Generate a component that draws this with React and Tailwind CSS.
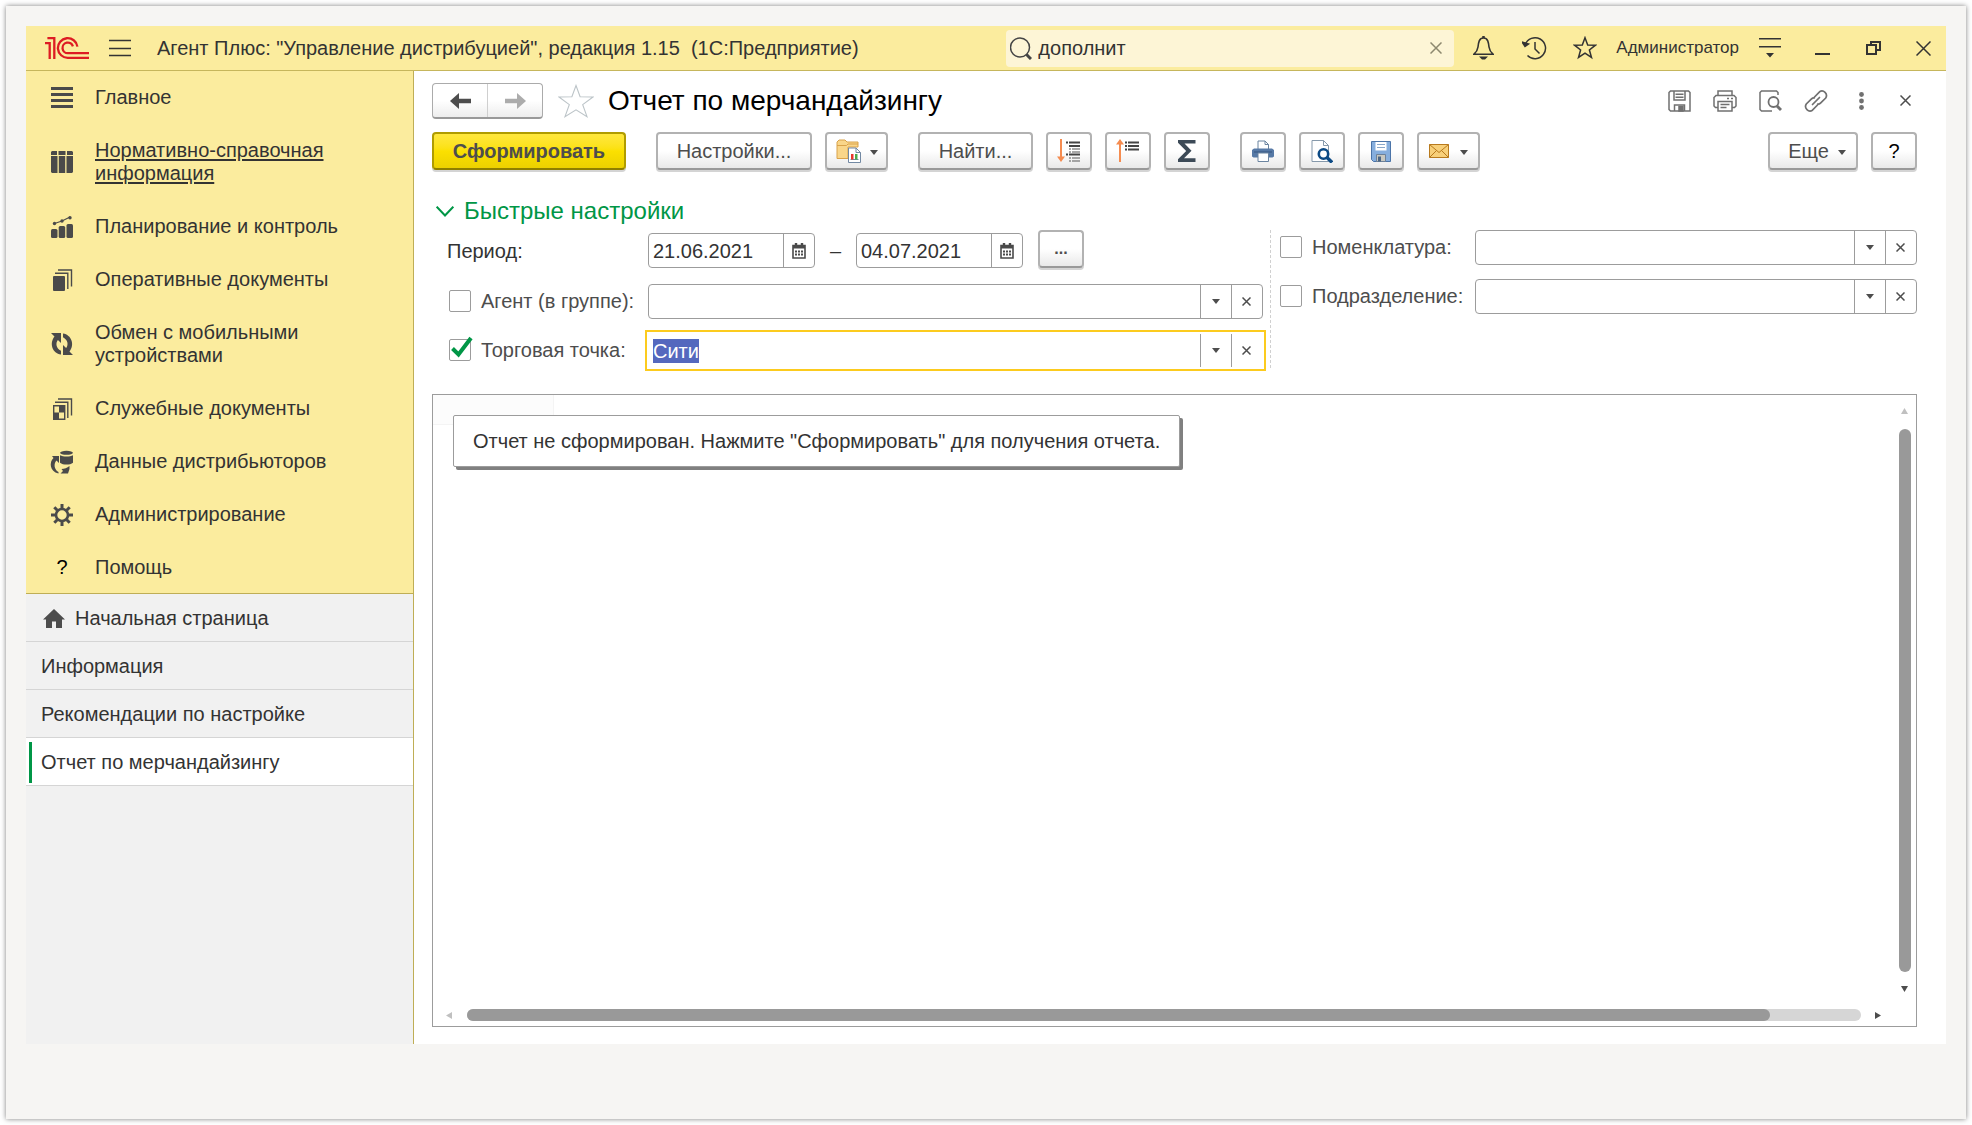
import { useEffect, useRef } from "react";

const buttonBase =
  "flex h-[38px] items-center justify-center rounded border-2 border-[#b2b2b2] border-b-[#999999] bg-linear-to-b from-white from-50% to-[#e9e9e9] text-[20px] leading-6 text-[#4d4d4d] shadow-[0_2px_0_#d4d4d4]";

function Caret({ className = "" }) {
  return (
    <svg width="8" height="5" viewBox="0 0 8 5" className={className} aria-hidden="true">
      <path d="M0 0h8L4 5z" fill="#4d4d4d" />
    </svg>
  );
}

function Cross({ size = 9, color = "#4d4d4d", width = 2 }) {
  return (
    <svg width={size} height={size} viewBox={`0 0 ${size} ${size}`} aria-hidden="true">
      <path d={`M.5 .5L${size - 0.5} ${size - 0.5}M${size - 0.5} .5L.5 ${size - 0.5}`} stroke={color} strokeWidth={width} fill="none" />
    </svg>
  );
}

function Logo() {
  return (
    <svg width="44" height="22" viewBox="0 0 44 22" fill="none" stroke="#dd1c23" strokeWidth="2.3" aria-label="1С">
      <path d="M0 6.2H4.7V22" />
      <path d="M2.4 1.2H9.3V22" />
      <path d="M32.4 9.6A9.8 9.8 0 1 0 23 20.8H44" />
      <path d="M27.9 9.4A5.3 5.3 0 1 0 23 16.2H44" />
    </svg>
  );
}

/* Section icons */
const sectionIcons = {
  main: (
    <path d="M0 1.5h22M0 7.5h22M0 13.5h22M0 19.5h22" stroke="#4a4a4a" strokeWidth="2.8" />
  ),
  reference: (
    <g fill="#4a4a4a">
      <path d="M1 0h5v4H0V1zM7.500 0h7v4h-7zM16 0h5l1 1v3h-6z" />
      <path d="M0 5h6.500v17H1l-1-1zM7.800 5h6.400v17H7.800zM15.500 5H22v16l-1 1h-5.500z" />
    </g>
  ),
  planning: (
    <g fill="#4a4a4a">
      <rect x="0" y="13" width="6.500" height="9" rx="1.500" />
      <rect x="7.700" y="10" width="6.500" height="12" rx="1.500" />
      <rect x="15.500" y="8" width="6.500" height="14" rx="1.500" />
      <path d="M3.500 7.500L11 5l8-4" stroke="#4a4a4a" strokeWidth="1.200" fill="none" />
      <circle cx="3.500" cy="7.500" r="1.700" />
      <circle cx="11" cy="5" r="1.700" />
      <circle cx="19" cy="1.700" r="1.700" />
    </g>
  ),
  documents: (
    <g fill="#4a4a4a">
      <rect x="2" y="7" width="12" height="15" rx="1" />
      <path d="M4 4.200h12.800V20M7 1h13.500v16.500" stroke="#4a4a4a" strokeWidth="1.400" fill="none" />
    </g>
  ),
  exchange: (
    <g fill="#4a4a4a">
      <path d="M0 0H10V10L6.900 6.900C4.500 10 4.800 15 10 17.800V21.600C1.500 20.300-2 10.500 3.500 3.500z" />
      <path d="M22 22H12V12L15.100 15.100C17.500 12 17.200 7 12 4.200V.4C20.500 1.700 24 11.500 18.500 18.500z" />
    </g>
  ),
  service: (
    <g fill="#4a4a4a">
      <path d="M2.700 7.700h11v13.600h-11z" fill="none" stroke="#4a4a4a" strokeWidth="1.400" />
      <path d="M8 8h6v6.500H8zM2.500 14.500H8V21H2.500z" />
      <path d="M4 4.200h12.800V20M7 1h13.500v16.500" stroke="#4a4a4a" strokeWidth="1.400" fill="none" />
    </g>
  ),
  distributors: (
    <g fill="#4a4a4a">
      <ellipse cx="15.500" cy="1.800" rx="6.500" ry="2" />
      <path d="M9 4.200c3 1.800 10 1.800 13 0v7.500c-3 2.500-10 2.500-13 0z" />
      <path d="M1 5h7v7L5.500 9.500C2.500 12.500 3 18.500 7.500 21v1.500C-1.500 20.500-2 11 2.500 7z" />
      <path d="M18.500 15v3l-1.500 4.500H9.500l2.500-2.500-1.500-2c3 0 5.500-1 8-3z" />
    </g>
  ),
  admin: (
    <g stroke="#4a4a4a" fill="none">
      <circle cx="11" cy="11" r="6" strokeWidth="2.600" />
      <path d="M11 0v4M11 18v4M0 11h4M18 11h4M3.300 3.300l3 3M15.700 15.700l3 3M3.300 18.700l3-3M15.700 6.300l3-3" strokeWidth="3" />
    </g>
  ),
};

const sections = [
  { label: "Главное", icon: "main" },
  { label: "Нормативно-справочная информация", icon: "reference", underlined: true },
  { label: "Планирование и контроль", icon: "planning" },
  { label: "Оперативные документы", icon: "documents" },
  { label: "Обмен с мобильными устройствами", icon: "exchange" },
  { label: "Служебные документы", icon: "service" },
  { label: "Данные дистрибьюторов", icon: "distributors" },
  { label: "Администрирование", icon: "admin" },
  { label: "Помощь", icon: null },
];

function TitleBar() {
  return (
    <header className="flex h-[45px] items-center border-b border-[#c6b65c] bg-[#fbec9e] pr-[15px] pl-[19px]">
      <Logo />
      <button type="button" aria-label="Меню" className="ml-5">
        <svg width="22" height="18" viewBox="0 0 22 18">
          <path d="M0 1.500h22M0 9.500h22M0 16.500h22" stroke="#333" strokeWidth="1.500" />
        </svg>
      </button>
      <h1 className="ml-[26px] flex-1 text-[20px] leading-6 whitespace-pre text-[#333]">
        Агент Плюс: "Управление дистрибуцией", редакция 1.15  (1С:Предприятие)
      </h1>
      <div className="flex h-[37px] w-[448px] items-center rounded bg-[#fdf5d6] pr-[8px] pl-1">
        <svg width="22" height="23" viewBox="0 0 22 23" fill="none" stroke="#444" className="shrink-0">
          <circle cx="10" cy="10.500" r="9.500" strokeWidth="1.500" />
          <path d="M16.500 17.500L21 22" strokeWidth="3" />
        </svg>
        <input
          type="text"
          aria-label="Поиск"
          defaultValue="дополнит"
          className="ml-[6px] min-w-0 flex-1 bg-transparent text-[20px] leading-6 text-[#333] outline-none"
        />
        <button type="button" aria-label="Очистить" className="p-1">
          <Cross size={12} color="#8d886f" width={1.5} />
        </button>
      </div>
      <button type="button" aria-label="Уведомления" className="ml-[19px]">
        <svg width="21" height="24" viewBox="0 0 21 24" fill="none" stroke="#333" strokeWidth="1.600">
          <path d="M10.500 2C6 2 5.500 6.500 5 11c-.4 3-1 4.500-4 7.200h19c-3-2.700-3.600-4.200-4-7.200-.5-4.500-1-9-5.500-9z" />
          <path d="M10.500 0v2" strokeWidth="2.500" />
          <path d="M6 20.500h9l-3 3H9z" fill="#333" stroke="none" />
        </svg>
      </button>
      <button type="button" aria-label="История" className="ml-[28px]">
        <svg width="25" height="24" viewBox="0 0 25 24" fill="none" stroke="#333" strokeWidth="1.500">
          <path d="M3.200 8.500A10.500 10.500 0 1 1 5.500 19.500" />
          <path d="M13 6v7l4.500 4.500" />
          <path d="M0 6l3 4.500L6.500 8z" fill="#333" />
        </svg>
      </button>
      <button type="button" aria-label="Избранное" className="ml-[26px]">
        <svg width="24" height="24" viewBox="0 0 24 24" fill="none" stroke="#333" strokeWidth="1.500">
          <path d="M12 1.700l2.700 7.200 7.700.3-6 4.800 2.100 7.500L12 17.200l-6.500 4.300L7.600 14l-6-4.800 7.700-.3z" />
        </svg>
      </button>
      <span className="ml-[19px] text-[17px] leading-5 text-[#333]">Администратор</span>
      <button type="button" aria-label="Настройки окна" className="ml-[20px]">
        <svg width="22" height="20" viewBox="0 0 22 20" fill="#333">
          <path d="M0 0h22v1.500H0zM0 8h22v1.500H0zM7 15h8l-4 4.500z" />
        </svg>
      </button>
      <button type="button" aria-label="Свернуть" className="ml-[34px] pt-3">
        <svg width="15" height="2" viewBox="0 0 15 2">
          <path d="M0 0h15v2H0z" fill="#333" />
        </svg>
      </button>
      <button type="button" aria-label="Восстановить" className="ml-[36px]">
        <svg width="15" height="14" viewBox="0 0 15 14" fill="none" stroke="#333" strokeWidth="2">
          <path d="M1 4h9v9H1zM5 4V1h9v8h-4" />
        </svg>
      </button>
      <button type="button" aria-label="Закрыть" className="ml-[35px]">
        <Cross size={15} color="#333" width={1.5} />
      </button>
    </header>
  );
}

function Sidebar() {
  return (
    <aside className="flex w-[388px] shrink-0 flex-col border-r border-[#bfae56] bg-[#f1f1f1] text-[20px] leading-[23px] text-[#333]">
      <nav aria-label="Разделы" className="border-b border-[#bfae56] bg-[#fbec9e]">
        {sections.map((s) => (
          <a key={s.label} href="#section" className="flex items-center py-[15px] pr-[60px] pl-[25px] last:pb-[14px]">
            <span className="mr-[22px] flex w-[22px] shrink-0 justify-center">
              {s.icon ? (
                <svg width="22" height="22" viewBox="0 0 22 22" className="overflow-visible" aria-hidden="true">
                  {sectionIcons[s.icon]}
                </svg>
              ) : (
                <span className="text-black" aria-hidden="true">?</span>
              )}
            </span>
            <span className={s.underlined ? "underline underline-offset-2" : ""}>{s.label}</span>
          </a>
        ))}
      </nav>
      <nav aria-label="Открытые окна">
        <a href="#home" className="flex h-12 items-center border-b border-[#d5d5d5] pt-px pl-[17px]">
          <svg width="22" height="19" viewBox="0 0 22 19" className="mr-[10px]" aria-hidden="true">
            <path d="M11 0L22 10.500H19V19H13V12.500H9V19H3V10.500H0z" fill="#4d4d4d" />
          </svg>
          Начальная страница
        </a>
        <a href="#info" className="flex h-12 items-center border-b border-[#d5d5d5] pt-px pl-[15px]">
          Информация
        </a>
        <a href="#tips" className="flex h-12 items-center border-b border-[#d5d5d5] pt-px pl-[15px]">
          Рекомендации по настройке
        </a>
        <a href="#report" aria-current="page" className="flex h-12 items-center border-b border-[#d5d5d5] bg-white pt-px pl-[3px]">
          <span className="mr-[9px] h-[41px] w-[3px] bg-[#009646]" />
          Отчет по мерчандайзингу
        </a>
      </nav>
    </aside>
  );
}

function WindowHeader() {
  return (
    <div className="flex h-9 items-center">
      <div className="flex h-9 rounded border border-[#ababab] border-b-2 border-b-[#999] bg-linear-to-b from-white from-50% to-[#ededed]">
        <button type="button" aria-label="Назад" className="flex w-[55px] items-center justify-center border-r border-[#cfcfcf]">
          <svg width="21" height="16" viewBox="0 0 21 16"><path d="M0 8L9 0v5.800h12v4.400H9V16z" fill="#4d4d4d" /></svg>
        </button>
        <button type="button" aria-label="Вперед" className="flex w-[54px] items-center justify-center">
          <svg width="21" height="16" viewBox="0 0 21 16"><path d="M21 8L12 0v5.800H0v4.400h12V16z" fill="#acacac" /></svg>
        </button>
      </div>
      <button type="button" aria-label="Добавить в избранное" className="ml-[15px]">
        <svg width="36" height="34" viewBox="0 0 36 34" fill="none" stroke="#bcc4c8" strokeWidth="1.100">
          <path d="M18 1.500l4.100 11.200 12.900.3-10.300 7.600 4.300 12L18 25.800 7 32.600l4.300-12L1 13l12.900-.3z" />
        </svg>
      </button>
      <h2 className="ml-[14px] flex-1 text-[28px] leading-8 text-black">Отчет по мерчандайзингу</h2>
      <div className="flex items-center gap-[22px] pr-px pb-px">
        <button type="button" aria-label="Сохранить">
          <svg width="23" height="22" viewBox="0 0 23 22" fill="none" stroke="#707070" strokeWidth="1.500">
            <path d="M2.500 1h18l1.500 1.500V21H2.500L1 19.500V2.500zM6 1v9h11V1M7.500 4.300h8M7.500 7.200h8M6.500 21v-6h10v6" />
            <path d="M11 16.500h4V21h-4z" fill="#707070" />
          </svg>
        </button>
        <button type="button" aria-label="Печать">
          <svg width="24" height="22" viewBox="0 0 24 22" fill="none" stroke="#707070" strokeWidth="1.500">
            <path d="M5 5V1h14v4M5 17.500H2.500L1 16V7.500L3 5.500h18l2 2V16l-1.500 1.500H19M5 11.500h14V21H5zM7.500 14.500h9M7.500 17.500h6M14 8.500h2M18 8.500h2" />
          </svg>
        </button>
        <button type="button" aria-label="Просмотр">
          <svg width="23" height="22" viewBox="0 0 23 22" fill="none" stroke="#707070" strokeWidth="1.500">
            <path d="M19 5V2.500L17.500 1H2.500L1 2.500V19.500L2.500 21H13" />
            <circle cx="14.500" cy="12" r="5" strokeWidth="1.800" />
            <path d="M18 16l4 4" strokeWidth="3" />
          </svg>
        </button>
        <button type="button" aria-label="Ссылка">
          <svg width="24" height="24" viewBox="0 0 24 24" fill="none" stroke="#707070" strokeWidth="1.700" strokeLinecap="round">
            <path d="M10.500 8l5-5.200a4.500 4.500 0 0 1 6.200 6.200l-5.200 5.200c-.8.800-1.800 1.100-2.800 1" />
            <path d="M13.500 16l-5 5.200a4.500 4.500 0 0 1-6.200-6.200l5.200-5.200c.8-.8 1.800-1.100 2.800-1" />
            <path d="M8.500 15.500l7-7" />
          </svg>
        </button>
        <button type="button" aria-label="Еще действия" className="flex w-[22px] justify-center">
          <svg width="5" height="18" viewBox="0 0 5 18" fill="#707070">
            <circle cx="2.500" cy="2.500" r="2.400" /><circle cx="2.500" cy="9" r="2.400" /><circle cx="2.500" cy="15.500" r="2.400" />
          </svg>
        </button>
        <button type="button" aria-label="Закрыть отчет" className="flex w-[22px] justify-center">
          <Cross size={11} color="#4d4d4d" width={1.5} />
        </button>
      </div>
    </div>
  );
}

function Toolbar() {
  return (
    <div className="mt-[13px] flex items-center">
      <button
        type="button"
        className="h-[38px] w-[194px] rounded border-2 border-[#b09c00] border-b-[#8f7f00] bg-linear-to-b from-[#ffe83c] via-[#fbe000] to-[#ecd100] text-[20px] leading-6 font-bold text-[#4d4d4d] shadow-[0_2px_0_#d4d4d4]"
      >
        Сформировать
      </button>
      <button type="button" className={`${buttonBase} ml-[30px] w-[156px]`}>Настройки...</button>
      <button type="button" aria-label="Варианты отчета" className={`${buttonBase} ml-[13px] w-[63px] gap-[9px]`}>
        <svg width="25" height="24" viewBox="0 0 25 24">
          <path d="M1 19.500V3L3 1h6l2 2h11v5H12v11.500z" fill="#f9d68a" stroke="#d9a24a" />
          <path d="M1 6.500h9.500l1.500-1.500h10" fill="none" stroke="#d9a24a" />
          <path d="M12.500 9h7.500l4.500 4.500v10h-12z" fill="#fff" stroke="#7289a3" />
          <path d="M20 9v4.500h4.500" fill="none" stroke="#7289a3" />
          <path d="M14.500 20.500h8" stroke="#7289a3" />
          <path d="M15 15h2.500v5.500H15z" fill="#e8372c" />
          <path d="M19 15h2.500v5.500H19z" fill="#4caa4c" />
        </svg>
        <Caret className="mt-[3px]" />
      </button>
      <button type="button" className={`${buttonBase} ml-[30px] w-[115px]`}>Найти...</button>
      <button type="button" aria-label="Развернуть группы" className={`${buttonBase} ml-[13px] w-[46px]`}>
        <svg width="24" height="24" viewBox="0 0 24 24" fill="none">
          <path d="M4 0v18" stroke="#f58c50" strokeWidth="2" />
          <path d="M0 17.500h8L4 23z" fill="#f58c50" />
          <path d="M9 3.500h2M9 15.500h2M12 3.500H23M12 7H23M12 15.500H23" stroke="#444" strokeWidth="1.800" />
          <path d="M12 10h2M12 13h2M12 19h2M12 22h2M15 10h8M15 13h8M15 19h8M15 22h8" stroke="#8c8c8c" strokeWidth="1.700" />
        </svg>
      </button>
      <button type="button" aria-label="Свернуть группы" className={`${buttonBase} ml-[13px] w-[46px]`}>
        <svg width="24" height="24" viewBox="0 0 24 24" fill="none">
          <path d="M4 5v18" stroke="#f58c50" strokeWidth="2" />
          <path d="M0 5.500h8L4 0z" fill="#f58c50" />
          <path d="M9 3.500h2M9 7h2M9 10.500h2M12 3.500H23M12 7H23M12 10.500H23" stroke="#444" strokeWidth="1.800" />
        </svg>
      </button>
      <button type="button" aria-label="Сумма" className={`${buttonBase} ml-[13px] w-[46px]`}>
        <svg width="18" height="22" viewBox="0 0 18 22">
          <path d="M0 0h17.500v3.500H6.500l7 7.300-7.500 7.400H17.500V22H0v-2.800l8.200-8.300L0 2.800z" fill="#3c4a57" />
        </svg>
      </button>
      <button type="button" aria-label="Печать" className={`${buttonBase} ml-[30px] w-[46px]`}>
        <svg width="22" height="22" viewBox="0 0 22 22">
          <path d="M6 9V1h7l3.500 3.500V9" fill="#fff" stroke="#6b84a0" />
          <path d="M13 1v3.500h3.500" fill="none" stroke="#6b84a0" />
          <path d="M2 8.500h18l2 1.500v6.500l-1.500 1H1.500L0 16.500V10z" fill="#5679a6" />
          <path d="M2 12h18" stroke="#34557f" />
          <path d="M6 13h10.500v8.500H6z" fill="#fff" stroke="#6b84a0" />
        </svg>
      </button>
      <button type="button" aria-label="Предварительный просмотр" className={`${buttonBase} ml-[13px] w-[46px]`}>
        <svg width="22" height="23" viewBox="0 0 22 23" fill="none">
          <path d="M1 .5h11.500L17.500 5.500V21.500H1z" fill="#fff" stroke="#8699ab" />
          <path d="M12.500 .5v5h5" stroke="#8699ab" />
          <circle cx="12.500" cy="14" r="4.700" fill="#fff" stroke="#0c4a85" strokeWidth="2.600" />
          <path d="M16 17.500l5 5" stroke="#0c4a85" strokeWidth="3.400" />
        </svg>
      </button>
      <button type="button" aria-label="Сохранить" className={`${buttonBase} ml-[13px] w-[46px]`}>
        <svg width="20" height="21" viewBox="0 0 20 21">
          <path d="M.5 .5h19v20H2.500L.5 18.500z" fill="#86aedd" stroke="#4b74a8" />
          <path d="M4.500 1h11v8.500h-11z" fill="#fff" />
          <path d="M6 3.500h8M6 6.500h8" stroke="#8aa7c9" />
          <path d="M5.500 13.500h9v7h-9z" fill="#c8c8c0" stroke="#6d8199" />
          <path d="M7 15.500h3v5H7z" fill="#4b6584" />
        </svg>
      </button>
      <button type="button" aria-label="Отправить" className={`${buttonBase} ml-[13px] w-[63px] gap-[11px]`}>
        <svg width="20" height="14" viewBox="0 0 20 14">
          <path d="M.5 .5h19v13H.5z" fill="#f8d07a" stroke="#b87a1e" />
          <path d="M.5 .5L10 8.500 19.500 .5M.5 13.500L7.500 6.500M19.500 13.500L12.500 6.500" fill="none" stroke="#b87a1e" />
        </svg>
        <Caret className="mt-[3px]" />
      </button>
      <button type="button" className={`${buttonBase} ml-auto w-[90px] gap-[9px] pl-2`}>
        Еще
        <Caret className="mt-[3px]" />
      </button>
      <button type="button" aria-label="Справка" className={`${buttonBase} ml-[13px] w-[46px]`}>
        <span className="text-black">?</span>
      </button>
    </div>
  );
}

function DateField({ label, value }) {
  return (
    <div className="flex h-[35px] w-[167px] rounded border border-[#9c9c9c] bg-white">
      <input
        type="text"
        aria-label={label}
        defaultValue={value}
        className="min-w-0 flex-1 bg-transparent pl-1 text-[20px] leading-6 text-[#333] outline-none"
      />
      <button type="button" aria-label="Выбрать дату" className="flex w-[31px] items-center justify-center border-l border-[#9c9c9c]">
        <svg width="14" height="16" viewBox="0 0 14 16" fill="none" stroke="#4a4a4a">
          <path d="M1 2.500h12v12.500H1z" strokeWidth="1.600" />
          <path d="M1 4h12" strokeWidth="3" />
          <path d="M4 0v4M10 0v4" strokeWidth="2.400" />
          <path d="M3 8.500h2M6 8.500h2M9 8.500h2M3 11.500h2M6 11.500h2M9 11.500h2" strokeWidth="1.800" />
        </svg>
      </button>
    </div>
  );
}

function FilterRow({ id, label, value = "", checked = false, focused = false, columns }) {
  const inputRef = useRef(null);
  useEffect(() => {
    if (focused) {
      inputRef.current.focus();
      inputRef.current.select();
    }
  }, [focused]);

  return (
    <div className={`grid h-[35px] items-center ${columns}`}>
      <div className="flex items-center pb-px">
        <span className="relative flex size-[22px] shrink-0">
          <input
            id={`${id}-on`}
            type="checkbox"
            defaultChecked={checked}
            className="peer size-[22px] appearance-none rounded-xs border border-[#9c9c9c] bg-white"
          />
          <svg
            width="22"
            height="22"
            viewBox="0 0 22 22"
            className="pointer-events-none absolute inset-0 hidden overflow-visible peer-checked:block"
            aria-hidden="true"
          >
            <path d="M3.500 9.500L9.500 15.500 22-1" fill="none" stroke="#009646" strokeWidth="4" />
          </svg>
        </span>
        <label htmlFor={`${id}-on`} className="ml-[10px] text-[20px] leading-6 whitespace-nowrap text-[#4d4d4d]">
          {label}
        </label>
      </div>
      <div
        className={
          focused
            ? "flex h-[35px] rounded-none border border-transparent bg-white outline-2 outline-offset-1 outline-[#fccb1e]"
            : "flex h-[35px] rounded border border-[#9c9c9c] bg-white"
        }
      >
        <input
          ref={inputRef}
          type="text"
          aria-label={label}
          defaultValue={value}
          className="min-w-0 flex-1 bg-transparent pl-1 text-[20px] leading-6 text-[#333] outline-none selection:bg-[#5468be] selection:text-white"
        />
        <button type="button" aria-label="Выбрать из списка" className="flex w-[31px] items-center justify-center border-l border-[#9c9c9c]">
          <Caret />
        </button>
        <button type="button" aria-label="Очистить" className="flex w-[31px] items-center justify-center border-l border-[#9c9c9c] pr-px">
          <Cross size={9} width={1.5} />
        </button>
      </div>
    </div>
  );
}

function QuickSettings() {
  return (
    <section>
      <h3 className="mt-[27px] text-[24px] leading-7 text-[#009646]">
        <button type="button" aria-expanded="true" className="flex items-center pl-1">
          <svg width="18" height="11" viewBox="0 0 18 11" className="mr-[10px]" aria-hidden="true">
            <path d="M.7 .7L9 9.500 17.300 .7" fill="none" stroke="#009646" strokeWidth="2" />
          </svg>
          Быстрые настройки
        </button>
      </h3>
      <div className="mt-[5px] grid grid-cols-[831fr_8px_646fr]">
        <div className="pl-[15px]">
          <div className="mb-4 flex items-end">
            <span className="flex h-[35px] w-[201px] items-center text-[20px] leading-6 text-[#333]">Период:</span>
            <DateField label="Начало периода" value="21.06.2021" />
            <span className="flex h-[35px] w-[41px] items-center justify-center text-[20px] leading-6 text-[#333]">–</span>
            <DateField label="Конец периода" value="04.07.2021" />
            <button type="button" aria-label="Выбрать период" className={`${buttonBase} ml-[15px] w-[46px] font-bold`}>
              <span className="text-[16px]">...</span>
            </button>
          </div>
          <div className="flex flex-col gap-[14px] pl-[2px]">
            <FilterRow id="agent" label="Агент (в группе):" columns="grid-cols-[199px_1fr]" />
            <FilterRow id="outlet" label="Торговая точка:" value="Сити" checked focused columns="grid-cols-[199px_1fr]" />
          </div>
        </div>
        <div className="border-r border-dashed border-[#d0d0d0]" />
        <div className="flex flex-col gap-[14px] pl-[9px]">
          <FilterRow id="item" label="Номенклатура:" columns="grid-cols-[195px_1fr]" />
          <FilterRow id="division" label="Подразделение:" columns="grid-cols-[195px_1fr]" />
        </div>
      </div>
    </section>
  );
}

function ReportArea() {
  return (
    <section className="relative mt-[26px] flex flex-1 flex-col border border-[#9c9c9c] bg-white">
      <div className="flex flex-1">
        <div className="flex-1">
          <div className="h-[30px] w-[121px] border-r border-b border-[#f4f4f4] bg-[#fcfcfc]" />
        </div>
        <div className="flex w-[23px] flex-col items-center pt-[13px]">
          <svg width="7" height="6" viewBox="0 0 7 6"><path d="M3.500 0L7 6H0z" fill="#c0c0c0" /></svg>
          <div className="mt-[15px] mb-[14px] w-3 flex-1 rounded-full bg-[#999]" />
          <svg width="7" height="6" viewBox="0 0 7 6"><path d="M0 0h7L3.500 6z" fill="#4d4d4d" /></svg>
        </div>
      </div>
      <div className="mt-[17px] flex h-[17px] items-start pr-[35px] pl-[13px]">
        <svg width="6" height="7" viewBox="0 0 6 7" className="mt-[3px]"><path d="M6 0v7L0 3.500z" fill="#c0c0c0" /></svg>
        <div className="mr-[14px] ml-[15px] h-3 flex-1 rounded-full bg-[#d6d6d6]">
          <div className="h-3 w-[93.5%] rounded-full bg-[#999]" />
        </div>
        <svg width="6" height="7" viewBox="0 0 6 7" className="mt-[3px]"><path d="M0 0v7l6-3.500z" fill="#4d4d4d" /></svg>
      </div>
      <div
        role="status"
        className="absolute top-5 left-5 rounded-xs border border-[#9c9c9c] bg-white px-[19px] py-[13px] text-[20px] leading-6 text-[#333] shadow-[3px_3px_0_#808080]"
      >
        Отчет не сформирован. Нажмите "Сформировать" для получения отчета.
      </div>
    </section>
  );
}

export default function App() {
  return (
    <div className="flex min-h-screen flex-col bg-white p-[6px] font-['Liberation_Sans',Arial,sans-serif]">
      <div className="flex flex-1 flex-col bg-[#f6f5f3] px-5 pt-5 pb-[75px] shadow-[0_0_5px_rgba(0,0,0,0.5)]">
        <div className="flex flex-1 flex-col bg-white">
          <TitleBar />
          <div className="flex flex-1">
            <Sidebar />
            <main className="flex min-w-0 flex-1 flex-col pt-3 pr-[29px] pb-[17px] pl-[18px]">
              <WindowHeader />
              <Toolbar />
              <QuickSettings />
              <ReportArea />
            </main>
          </div>
        </div>
      </div>
    </div>
  );
}
